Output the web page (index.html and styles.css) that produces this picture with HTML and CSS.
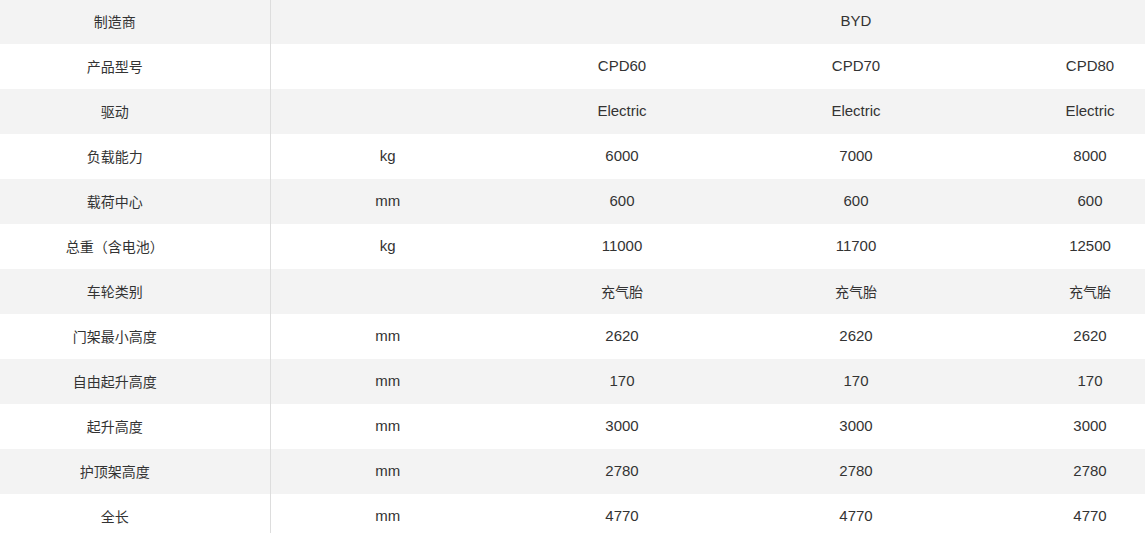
FILE: index.html
```html
<!DOCTYPE html>
<html lang="zh">
<head>
<meta charset="utf-8">
<link rel="stylesheet" href="styles.css">
</head>
<body>
<div class="wrap">
<table class="spec">
<colgroup>
<col class="c-label"><col class="c-unit"><col class="c-val"><col class="c-val"><col class="c-val">
</colgroup>
<tbody>
<tr><td class="label">制造商</td><td></td><td colspan="3">BYD</td></tr>
<tr><td class="label">产品型号</td><td></td><td>CPD60</td><td>CPD70</td><td>CPD80</td></tr>
<tr><td class="label">驱动</td><td></td><td>Electric</td><td>Electric</td><td>Electric</td></tr>
<tr><td class="label">负载能力</td><td>kg</td><td>6000</td><td>7000</td><td>8000</td></tr>
<tr><td class="label">载荷中心</td><td>mm</td><td>600</td><td>600</td><td>600</td></tr>
<tr><td class="label">总重（含电池）</td><td>kg</td><td>11000</td><td>11700</td><td>12500</td></tr>
<tr><td class="label">车轮类别</td><td></td><td class="zh">充气胎</td><td class="zh">充气胎</td><td class="zh">充气胎</td></tr>
<tr><td class="label">门架最小高度</td><td>mm</td><td>2620</td><td>2620</td><td>2620</td></tr>
<tr><td class="label">自由起升高度</td><td>mm</td><td>170</td><td>170</td><td>170</td></tr>
<tr><td class="label">起升高度</td><td>mm</td><td>3000</td><td>3000</td><td>3000</td></tr>
<tr><td class="label">护顶架高度</td><td>mm</td><td>2780</td><td>2780</td><td>2780</td></tr>
<tr><td class="label">全长</td><td>mm</td><td>4770</td><td>4770</td><td>4770</td></tr>
</tbody>
</table>
</div>
</body>
</html>
```
FILE: styles.css
```css
html, body {
  margin: 0;
  padding: 0;
  overflow: hidden;
  background: #fff;
}
.wrap {
  width: 1145px;
  height: 533px;
  overflow: hidden;
}
.spec {
  border-collapse: collapse;
  table-layout: fixed;
  width: 1207px;
  margin-top: -1px;
  font-family: "Liberation Sans", Arial, "Noto Sans CJK SC", sans-serif;
  font-size: 15px;
  color: #333;
}
.c-label { width: 270px; }
.c-unit { width: 235px; }
.c-val { width: 234px; }
.spec td {
  height: 45px;
  padding: 0 0 2px;
  text-align: center;
  vertical-align: middle;
  box-sizing: border-box;
}
.spec tr:nth-child(odd) { background: #f3f3f3; }
.spec tr:nth-child(even) { background: #fff; }
.spec td.label {
  padding-right: 40px;
  border-right: 1px solid #dddddd;
  font-family: "Noto Sans CJK SC", sans-serif;
  font-size: 14px;
}
.spec td.zh {
  font-family: "Noto Sans CJK SC", sans-serif;
  font-size: 14px;
}
```
